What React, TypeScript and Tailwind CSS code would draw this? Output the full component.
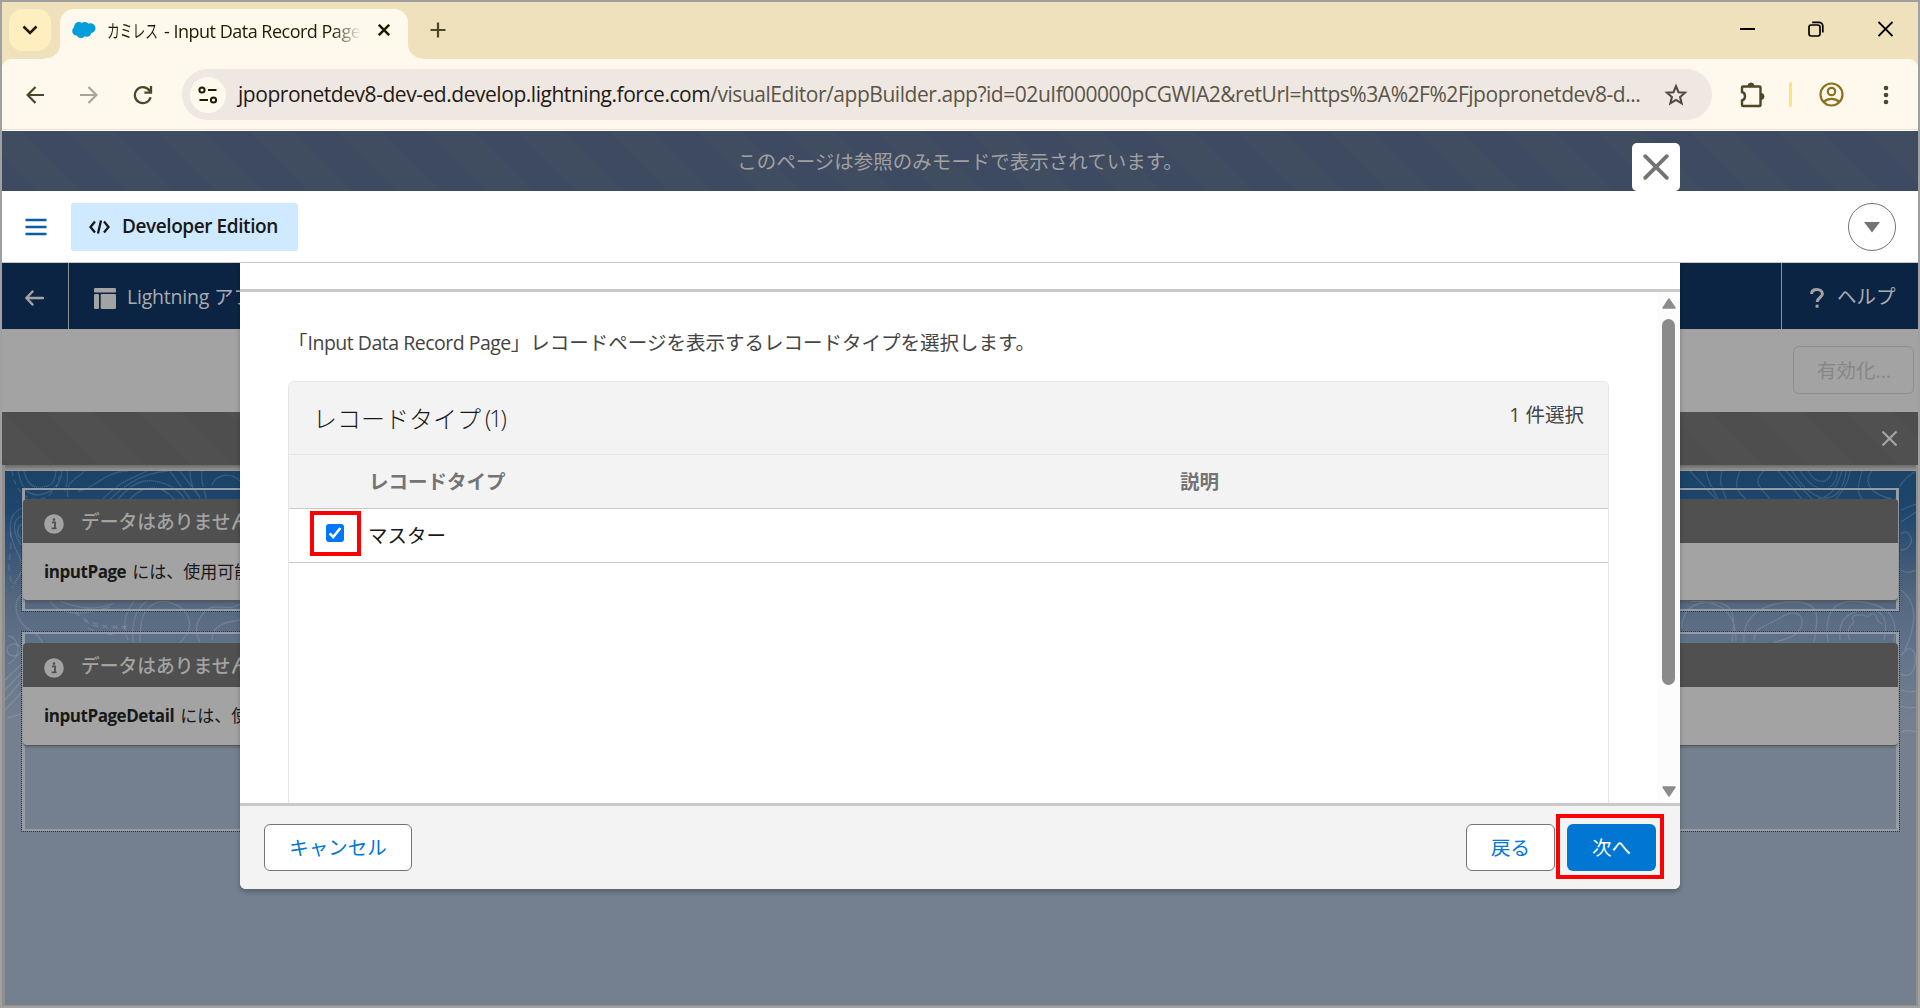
import React from 'react';
import { clsx } from 'clsx';

const FONT = "font-['Open_Sans','Noto_Sans_CJK_JP',sans-serif]";

function TabStrip() {
  return (
    <div className="h-[57px] shrink-0 flex items-start bg-[#eee1bb] pl-[7px]">
      <button className="mt-[7px] w-[42px] h-[42px] rounded-[14px] bg-[#ffefc0] flex items-center justify-center">
        <svg width="16" height="10" viewBox="0 0 16 10" fill="none" stroke="#231b00" strokeWidth="2.6">
          <path d="M1.5 1.5 8 8l6.5-6.5" />
        </svg>
      </button>
      {/* Active tab */}
      <div className="relative ml-[9px] mt-[7px] h-[50px] w-[348px] rounded-t-[14px] bg-[#fff9ed] flex items-start">
        <svg className="absolute -left-[15px] bottom-0" width="15" height="15" viewBox="0 0 15 15" fill="#fff9ed">
          <path d="M15 0A14 14 0 0 1 1 14.2H0V15h15z" />
        </svg>
        <svg className="absolute -right-[15px] bottom-0" width="15" height="15" viewBox="0 0 15 15" fill="#fff9ed">
          <path d="M0 0a14 14 0 0 0 14 14.2h1V15H0z" />
        </svg>
        <svg className="ml-[12px] mt-[12px]" width="24" height="18" viewBox="0 0 24 18" fill="#009edb">
          <circle cx="7" cy="6" r="5" />
          <circle cx="12.8" cy="5" r="4" />
          <circle cx="18.5" cy="7.3" r="5" />
          <circle cx="4.7" cy="10" r="4.5" />
          <circle cx="9" cy="12.4" r="4.6" />
          <circle cx="15" cy="11.5" r="4.2" />
          <path d="M5 4h14v9H5z" />
        </svg>
        <div className="ml-[11px] mt-[9px] w-[254px] h-[30px] overflow-hidden whitespace-nowrap flex text-[18px] leading-[27px] text-[#231b00] [mask-image:linear-gradient(to_right,#000_225px,transparent_254px)]">
          <span className="w-[57px] shrink-0 origin-left scale-x-[0.71]">カミレス</span>
          <span className="tracking-[-0.5px]">- Input Data Record Page</span>
        </div>
        <svg className="ml-[17px] mt-[15px]" width="12" height="12" viewBox="0 0 12 12" stroke="#231b00" strokeWidth="2.5">
          <path d="m.8.8 10.4 10.4M11.2.8.8 11.2" />
        </svg>
      </div>
      <svg className="ml-[22px] mt-[20px]" width="16" height="16" viewBox="0 0 16 16" stroke="#4e4628" strokeWidth="2.2">
        <path d="M8 .5v15M.5 8h15" />
      </svg>
      <div className="ml-auto mt-[19px] mr-[25px] flex items-center gap-[54px]">
        <svg className="-mr-[1px]" width="15" height="16" viewBox="0 0 15 16" stroke="#000" strokeWidth="2">
          <path d="M0 8h15" />
        </svg>
        <svg width="16" height="16" viewBox="0 0 16 16" fill="none" stroke="#000" strokeWidth="1.7">
          <rect x="1" y="4" width="11" height="11" rx="2.2" />
          <path d="M4.2 1.3h6.6a4 4 0 0 1 4 4v6.2" />
        </svg>
        <svg width="15" height="16" viewBox="0 0 15 16" stroke="#000" strokeWidth="1.8">
          <path d="m.5 1 14 14M14.5 1 .5 15" />
        </svg>
      </div>
    </div>
  );
}

function Toolbar() {
  return (
    <div className="h-[72px] shrink-0 bg-[#eee1bb]">
      <div className="h-[72px] rounded-t-[9px] bg-[#fff9ed] border-b border-white flex">
        <div className="flex-1 border-b border-[#ebe2cd] flex items-center pl-[24px] pt-px">
          <svg width="18" height="18" viewBox="0 0 18 18" fill="none" stroke="#4e4628" strokeWidth="2.2">
            <path d="M9.5 1 1.6 9l7.9 8M1.6 9H18" />
          </svg>
          <svg className="ml-[36px]" width="18" height="18" viewBox="0 0 18 18" fill="none" stroke="#a9a495" strokeWidth="2.2">
            <path d="m8.5 1 7.9 8-7.9 8M16.4 9H0" />
          </svg>
          <svg className="ml-[35px]" width="20" height="20" viewBox="0 0 20 20" fill="none" stroke="#4e4628" strokeWidth="2.3">
            <path d="M17.6 12.2A8 8 0 1 1 16.2 5.2L17.8 7M18 1v6.6h-6.6" />
          </svg>
          <div className="ml-[29px] w-[1530px] h-[51px] rounded-full bg-[#efe7e1] flex items-center">
            <div className="ml-[8px] size-[36px] rounded-full bg-[#fff9ed] flex items-center justify-center">
              <svg width="20" height="18" viewBox="0 0 20 18" fill="none" stroke="#231b00" strokeWidth="2">
                <circle cx="4" cy="4" r="2.6" />
                <path d="M10 4h8.5M1.5 14H10" />
                <circle cx="15.5" cy="14" r="2.6" />
              </svg>
            </div>
            <div className="ml-[12px] w-[1404px] whitespace-nowrap text-[21px] tracking-[-0.46px] text-[#5a5548]">
              <span className="text-[#231b14]">jpopronetdev8-dev-ed.develop.lightning.force.com</span>
              /visualEditor/appBuilder.app?id=02uIf000000pCGWIA2&retUrl=https%3A%2F%2Fjpopronetdev8-d...
            </div>
            <svg className="ml-[22px]" width="24" height="24" viewBox="0 0 24 24" fill="none" stroke="#4e4a40" strokeWidth="2.1">
              <path d="m12 3.2 2.5 6 6.5.5-4.9 4.3 1.5 6.3-5.6-3.4-5.6 3.4 1.5-6.3L3 9.7l6.5-.5z" />
            </svg>
          </div>
          <svg className="ml-[27px]" width="26" height="26" viewBox="0 0 26 26" fill="none" stroke="#4e4628" strokeWidth="2.4">
            <path d="M4 4.5h16.5a1 1 0 0 1 1 1V23a1 1 0 0 1-1 1H4a1 1 0 0 1-1-1v-4.5c4-1 4-7.5 0-8.5V5.500a1 1 0 0 1 1-1z" />
            <path d="M9 4a3 3 0 0 1 6 0zM22 11.5a3 3 0 0 1 0 6z" fill="#4e4628" strokeWidth="1" />
          </svg>
          <div className="ml-[24px] w-[3px] h-[25px] rounded-full bg-[#ffe27d]" />
          <svg className="ml-[27px]" width="25" height="25" viewBox="0 0 25 25" fill="none" stroke="#8b7220" strokeWidth="2.2">
            <circle cx="12.5" cy="12.5" r="11" />
            <circle cx="12.5" cy="9.5" r="3.7" />
            <path d="M4.8 19.8c4.2-4 11.2-4 15.4 0" />
          </svg>
          <svg className="ml-[39px]" width="6" height="20" viewBox="0 0 6 20" fill="#4e4628">
            <circle cx="3" cy="3" r="2.3" />
            <circle cx="3" cy="10" r="2.3" />
            <circle cx="3" cy="17" r="2.3" />
          </svg>
        </div>
      </div>
    </div>
  );
}

function OrgHeader() {
  return (
    <div className="h-[72px] shrink-0 bg-white border-b border-[#c9c9c9] flex items-center pl-[23px] pr-[22px]">
      <svg width="22" height="18" viewBox="0 0 22 18" stroke="#0b5cab" strokeWidth="2.5">
        <path d="M.5 2h21M.5 9h21M.5 16h21" />
      </svg>
      <div className="ml-[24px] w-[227px] h-[48px] rounded-[3px] bg-[#cfe9fe] flex items-center pl-[18px]">
        <svg width="21" height="14" viewBox="0 0 21 14" fill="none" stroke="#181818" strokeWidth="2.3">
          <path d="M6 1.5 1.5 7 6 12.5M15 1.5 19.5 7 15 12.5M12 .5 9 13.5" />
        </svg>
        <span className="ml-[12px] text-[19px] font-semibold tracking-[-0.42px] text-[#181818]">Developer Edition</span>
      </div>
      <div className="ml-auto size-[48px] rounded-full border border-[#747474] flex items-center justify-center pt-px">
        <svg width="16" height="11" viewBox="0 0 16 11" fill="#747474">
          <path d="M0 0h16L8 10.5z" />
        </svg>
      </div>
    </div>
  );
}

function AppNav() {
  return (
    <div className="h-[66px] shrink-0 bg-[#0b2443] flex text-[19.5px] text-[#a9acb0]">
      <div className="w-[67px] border-r border-[#8d9094] flex items-center pl-[23px] pt-[4px]">
        <svg width="19" height="16" viewBox="0 0 19 16" fill="none" stroke="#a3a3a3" strokeWidth="2.4" strokeLinecap="round">
          <path d="M7.5 1.5 1.5 8l6 6.5M1.8 8H18" />
        </svg>
      </div>
      <div className="flex items-center pl-[25px]">
        <svg className="mt-[4px]" width="22" height="21" viewBox="0 0 22 21" fill="#a3a3a3">
          <rect width="22" height="4.5" rx="1.3" />
          <rect y="6" width="5" height="15" rx="1.3" />
          <rect x="6.7" y="6" width="15.3" height="15" rx="1.3" />
        </svg>
        <span className="ml-[11px] mt-[2px] whitespace-nowrap tracking-[-0.2px]">Lightning アプ</span>
      </div>
      <div className="ml-auto w-[137px] border-l border-[#8d9094] flex items-center pl-[28px] pt-[2px]">
        <svg className="mt-[2px]" width="14" height="20" viewBox="0 0 14 20" fill="none" stroke="#a3a3a3" strokeWidth="3">
          <path d="M1.6 6C1.6 3 4 1.6 7 1.6s5.4 1.7 5.4 4.4c0 3.5-5.2 3.5-5.2 8" />
          <path d="M5.6 18.2h3" />
        </svg>
        <span className="ml-[13px]">ヘルプ</span>
      </div>
    </div>
  );
}

/* Contour lines behind the canvas */
function Topography() {
  return (
    <svg className="absolute inset-0" width="1911" height="270" viewBox="5 471 1911 270" fill="none" stroke="#fff" strokeOpacity="0.13" strokeWidth="1.3">
      <path d="M18 471c4 22 14 26 25 23s17-8 19-23M24 471c3 14 10 18 20 16s11-8 12-16" />
      <path d="M12 471c6 40 46 36 48 0" strokeDasharray="5 4" />
      <path d="M67 471c2 12-3 20-3 20M68 497c-4-18 14-20 16-26M78 491c14 0 26-20 50-20M103 499c20-20 24-18 44-28M110 499c20-18 34-26 58-28M118 499c18-20 30-22 50-14 8 4 14 8 16 14M130 499c14-14 30-16 44 0" />
      <path d="M170 471l20 28M180 471l18 24M190 471c0 20 10 22 10 28M202 471c-2 14 4 20 4 28M212 485c4-10 18-14 28-4" />
      <path d="M22 508c-18 8-12 30-4 46s2 20-4 30M22 516c-12 4-8 20 0 30M22 524c-6 4-6 10 0 16" />
      <path d="M10 532c4 20-6 30 3 56" strokeDasharray="6 5" />
      <path d="M22 594c-12 10-4 30 8 36s18 20 16 36M50 601c10 16 32 14 60 6M60 601c18 8 38 10 54 2M140 642c0-20 2-30 12-37s30-2 36 12-6 26-20 34M133 642c-2-22 4-34 14-41M128 640c-8-18 0-30 6-39M200 642c-10-20 4-30 10-34s20 4 30-4M212 640c0-14 12-18 28-20" />
      <path d="M75 612c12 12 30 16 56 14M84 620c10 8 22 8 42 8M88 628c14 8 20 4 28 8" strokeDasharray="6 4" />
      <ellipse cx="14" cy="650" rx="7" ry="6" />
      <path d="M8 664c16-8 10-28 0-28M5 680l17-16M5 690l17-18M5 700l17-20M5 710l17-18M7 718c6-2 9-2 14-4" />
      {/* right edge */}
      <path d="M1690 471l26 28M1706 471c2 10 6 18 12 28M1722 471c-4 14 2 20 4 28M1740 471c-6 14-4 20 6 28M1764 471c-14 12 0 20 6 28M1778 471l24 28M1786 471l26 28M1792 471c22 36 50 36 54 0M1800 471c16 24 34 24 38 0M1808 471c8 14 20 14 24 0M1818 499c18-4 20-18 24-28M1850 471c-2 14-8 20-14 28M1862 471c-4 14-6 20 0 28M1872 471c-10 12 0 24 20 28M1896 499c2-14 8-20 20-28" />
      <path d="M1901 510l15-6M1901 522l15-10M1901 534c4-4 8-2 10 4s-4 12-10 12M1901 570c6 4 10 2 15 0" />
      <path d="M1682 628c0-16 8-26 30-26s24 14 20 40M1690 601c26 0 46 6 46 40M1744 642c-2-28 22-40 50-40s24 16 20 40M1754 640c0-14 14-14 26-22s22-6 22 4-8 16-28 20M1828 642c-4-28 4-44 34-40s36 18 32 40M1840 640c-2-20 6-28 26-30s22 14 18 30M1850 640c-4-8-2-12 4-18-6-8 6-8 12-6s2-4 8-2-2 4 8 10" />
      <path d="M1901 590c14 10 18 30 4 60M1901 656c8-14 16-6 14 8s-10 12-14 10M1901 690c10 4 10 0 15 2M1901 706c10 4 10 0 15 2M1901 732c6-2 10-2 15 0" />
    </svg>
  );
}

interface EmptyCardProps {
  name: string;
  message: string;
  tall?: boolean;
}

function EmptyCard({ name, message, tall = false }: EmptyCardProps) {
  return (
    <div className={clsx('border border-dotted border-[#173a5e]', tall ? 'h-[201px]' : 'h-[125px]')}>
      <div className="h-full border-x-3 border-y-2 border-[#969ca3] pt-[9px]">
        <div className="-mx-[2px] rounded-[4px] border-b border-[#565656] bg-[#a3a3a3] overflow-hidden shadow-[0_2px_2px_rgba(0,0,0,0.12)]">
          <div className="h-[44px] bg-[#505050] flex items-center pl-[21px]">
            <svg className="mt-[5px]" width="20" height="20" viewBox="0 0 20 20">
              <circle cx="10" cy="10" r="9.8" fill="#a3a3a3" />
              <path d="M8 8.3h3v5.4M7.6 14.3h5" stroke="#505050" strokeWidth="1.8" fill="none" />
              <circle cx="10" cy="5.6" r="1.3" fill="#505050" />
            </svg>
            <span className="ml-[17px] mt-[2px] text-[18.75px] font-medium text-[#a3a3a3] whitespace-nowrap">データはありません</span>
          </div>
          <div className={clsx('pl-[21px] flex items-center text-[17px] text-[#181818] whitespace-nowrap', tall ? 'h-[58px]' : 'h-[57px]')}>
            <b className="tracking-[-0.45px]">{name}</b>
            <span className="ml-[6px]">{message}</span>
          </div>
        </div>
      </div>
    </div>
  );
}

function RecordTypeTable() {
  return (
    <div className="mt-[23px] flex-1 rounded-t-[6px] border border-b-0 border-[#e5e5e5] overflow-hidden">
      <div className="h-[73px] bg-[#f3f3f3] border-b border-[#e5e5e5] flex justify-between pl-[24px] pr-[24px]">
        <h2 className="text-[24px] leading-[72px] font-light text-[#181818] flex">
          <span className="font-['Noto_Sans_CJK_JP',sans-serif]">レコードタイプ</span>
          <span className="ml-[4px] text-[23px] tracking-[-2px]">(1)</span>
        </h2>
        <span className="text-[19.5px] leading-[66px] text-[#444]">1 件選択</span>
      </div>
      <div className="h-[54px] bg-[#f3f3f3] border-b border-[#c9c9c9] flex items-center pl-[80px] text-[19.5px] font-bold text-[#747474]">
        <span className="w-[811px]">レコードタイプ</span>
        <span>説明</span>
      </div>
      <div className="h-[54px] border-b border-[#c9c9c9] flex items-center pl-[37px] text-[19.5px] text-[#181818]">
        <div className="relative size-[18px] -mt-[5px] rounded-[3px] bg-[#0075ff]">
          <svg width="18" height="18" viewBox="0 0 18 18" fill="none" stroke="#fff" strokeWidth="2.6">
            <path d="m3.6 9.4 3.6 3.6 7.2-9" />
          </svg>
          <div className="absolute -left-[16px] -top-[13px] w-[51px] h-[45px] border-4 border-[#ff0000]" />
        </div>
        <span className="ml-[24px]">マスター</span>
      </div>
    </div>
  );
}

function ActivationModal() {
  return (
    <div className="absolute left-[238px] top-[261px] w-[1440px] h-[626px] flex flex-col rounded-b-[6px] bg-white shadow-[0_3px_5px_rgba(0,0,0,0.25)]">
      <div className="h-[29px] shrink-0 border-b-3 border-[#c9c9c9]" />
      <div className="flex-1 min-h-0 flex">
        <div className="flex-1 flex flex-col px-[48px]">
          <p className="mt-[36px] h-[30px] leading-[30px] text-[19.5px] text-[#444] whitespace-nowrap">
            「<span className="tracking-[-0.5px]">Input Data Record Page</span>」レコードページを表示するレコードタイプを選択します。
          </p>
          <RecordTypeTable />
        </div>
        <div className="w-[23px] bg-[#fcfcfc] flex flex-col items-center pt-[6px] pb-[6px]">
          <svg width="14" height="11" viewBox="0 0 14 11" fill="#8b8b8b" stroke="#8b8b8b" strokeLinejoin="round" strokeWidth="1.5">
            <path d="M7 1 13 10H1z" />
          </svg>
          <div className="mt-[10px] w-[13px] h-[366px] rounded-full bg-[#8b8b8b]" />
          <svg className="mt-auto" width="14" height="11" viewBox="0 0 14 11" fill="#8b8b8b" stroke="#8b8b8b" strokeLinejoin="round" strokeWidth="1.5">
            <path d="M1 1h12L7 10z" />
          </svg>
        </div>
      </div>
      <div className="h-[86px] shrink-0 rounded-b-[6px] border-t-3 border-[#c9c9c9] bg-[#f3f3f3] flex items-center px-[24px] text-[19.5px]">
        <button className="w-[148px] h-[47px] rounded-[6px] border border-[#747474] bg-white text-[#0176d3]">キャンセル</button>
        <button className="ml-auto w-[89px] h-[47px] rounded-[6px] border border-[#747474] bg-white text-[#0176d3]">戻る</button>
        <button className="relative ml-[12px] w-[89px] h-[47px] rounded-[6px] bg-[#0176d3] text-white">
          次へ
          <span className="absolute -left-[11px] -top-[10px] w-[108px] h-[65px] border-4 border-[#ff0000]" />
        </button>
      </div>
      <button className="absolute right-0 -top-[120px] size-[48px] rounded-[5px] bg-white flex items-center justify-center">
        <svg width="26" height="26" viewBox="0 0 26 26" stroke="#747474" strokeWidth="3.8" strokeLinecap="round">
          <path d="m2.2 2.2 21.6 21.6M23.8 2.2 2.2 23.8" />
        </svg>
      </button>
    </div>
  );
}

export default function App() {
  return (
    <div className={clsx('relative w-[1920px] h-[1008px] overflow-hidden border-2 border-[#a0a0a0] flex flex-col', FONT)}>
      <TabStrip />
      <Toolbar />
      <div className="h-[60px] shrink-0 bg-[#404c60] bg-[linear-gradient(45deg,#3e4a61_25%,transparent_25%,transparent_50%,#3e4a61_50%,#3e4a61_75%,transparent_75%)] bg-size-[90px_90px] bg-position-[21px_0px] flex items-center justify-center pt-[2px] text-[19.5px] text-[#a0a0a0]">
        このページは参照のみモードで表示されています。
      </div>
      <OrgHeader />
      <AppNav />
      <div className="h-[83px] shrink-0 bg-[#a3a3a3] flex justify-end pt-[17px] pr-[4px]">
        <button className="w-[121px] h-[48px] rounded-[6px] border border-[#8f8f8f] pt-[1px] pl-[1px] text-[19.5px] text-[#878787]">有効化...</button>
      </div>
      <div className="h-[53px] shrink-0 bg-[#505050] bg-[linear-gradient(45deg,#4e4e4e_25%,transparent_25%,transparent_50%,#4e4e4e_50%,#4e4e4e_75%,transparent_75%)] bg-size-[90px_90px] flex items-center justify-end pr-[21px]">
        <svg width="15" height="15" viewBox="0 0 15 15" stroke="#a3a3a3" strokeWidth="2.3" strokeLinecap="round">
          <path d="m1.2 1.2 12.6 12.6M13.8 1.2 1.2 13.8" />
        </svg>
      </div>
      <div className="flex-1 bg-[#918f8d] pl-[3px] pr-[2px] pb-[1px] flex flex-col">
        <div className="h-[6px] shrink-0 bg-linear-to-b from-[#6c6c6c] to-[#989896]" />
        <div className="relative flex-1 bg-[#74808f] bg-[linear-gradient(to_bottom,#1b4367_0px,#1e466e_40px,#53677f_125px,#5f7189_170px,#74808f_250px)] pt-[16px] px-[16px]">
          <Topography />
          <div className="relative flex flex-col gap-[19px]">
            <EmptyCard name="inputPage" message="には、使用可能" />
            <EmptyCard name="inputPageDetail" message="には、使用" tall />
          </div>
        </div>
      </div>
      <ActivationModal />
    </div>
  );
}
